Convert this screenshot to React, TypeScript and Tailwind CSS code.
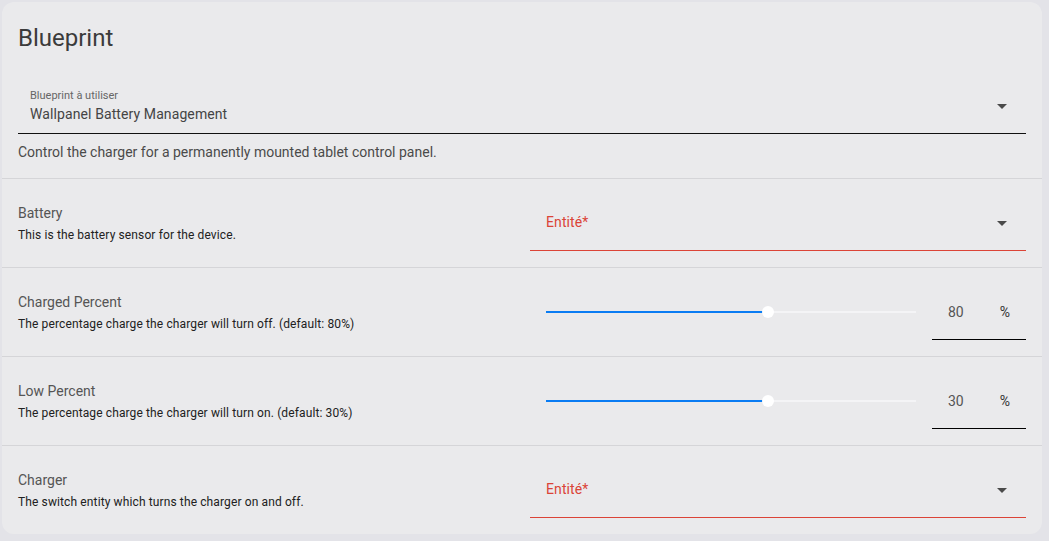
import React from 'react';

const font = { fontFamily: 'Roboto, "Noto Sans", sans-serif' };

function Arrow() {
  return (
    <svg width="24" height="24" viewBox="0 0 24 24" className="shrink-0 text-[#4a4a4a]">
      <path d="M7 10l5 5 5-5z" fill="currentColor" />
    </svg>
  );
}

function EntitySelect() {
  return (
    <div className="flex h-14 items-center justify-between border-b border-[#db4437] pl-4 pr-3">
      <span className="text-[14px] tracking-[0.1px] text-[#db4437]">Entité*</span>
      <Arrow />
    </div>
  );
}

function PercentSlider({ value }: { value: string }) {
  return (
    <div className="flex h-14 items-center gap-4 pl-4">
      <div className="relative h-[2px] w-[370px] bg-[#f4f4f6]">
        <div className="absolute left-0 top-0 h-[2px] w-[60%] bg-[#0a7cf3]" />
        <div className="absolute left-[60%] top-1/2 h-3 w-3 -translate-x-1/2 -translate-y-1/2 rounded-full bg-white" />
      </div>
      <div className="flex h-14 flex-1 items-center justify-between border-b border-black pl-4 pr-4 pt-[2px] text-[14px] text-[#555]">
        <span>{value}</span>
        <span className="text-[#333]">%</span>
      </div>
    </div>
  );
}

function Row({ name, desc, children }: { name: string; desc: string; children: React.ReactNode }) {
  return (
    <div className="flex items-center border-t border-[#d5d5d8] px-4 py-4">
      <div className="flex flex-1 flex-col gap-1">
        <div className="text-[14px] leading-5 text-[#555]">{name}</div>
        <div className="text-[12px] leading-4 tracking-[0.12px] text-[#212121]">{desc}</div>
      </div>
      <div className="w-[496px]">{children}</div>
    </div>
  );
}

export default function App() {
  return (
    <div className="h-[541px] w-full bg-[#e3e3e8] p-[2px]" style={font}>
      <div className="w-[1040px] overflow-hidden rounded-xl bg-[#eaeaec]">
        <div className="px-4 pt-3 text-[24px] leading-[48px] text-[#3b3b3b]">Blueprint</div>

        <div className="px-4 pt-4 pb-4">
          <div className="flex h-14 items-center justify-between border-b border-[#111] pl-3 pr-3">
            <div className="flex flex-col">
              <span className="text-[11px] leading-4 text-[#666]">Blueprint à utiliser</span>
              <span className="text-[14px] leading-5 tracking-[0.1px] text-[#444]">Wallpanel Battery Management</span>
            </div>
            <Arrow />
          </div>
          <div className="mt-2 text-[14px] leading-5 text-[#4a4a4a]">
            Control the charger for a permanently mounted tablet control panel.
          </div>
        </div>

        <Row name="Battery" desc="This is the battery sensor for the device.">
          <EntitySelect />
        </Row>
        <Row name="Charged Percent" desc="The percentage charge the charger will turn off. (default: 80%)">
          <PercentSlider value="80" />
        </Row>
        <Row name="Low Percent" desc="The percentage charge the charger will turn on. (default: 30%)">
          <PercentSlider value="30" />
        </Row>
        <Row name="Charger" desc="The switch entity which turns the charger on and off.">
          <EntitySelect />
        </Row>
      </div>
    </div>
  );
}
